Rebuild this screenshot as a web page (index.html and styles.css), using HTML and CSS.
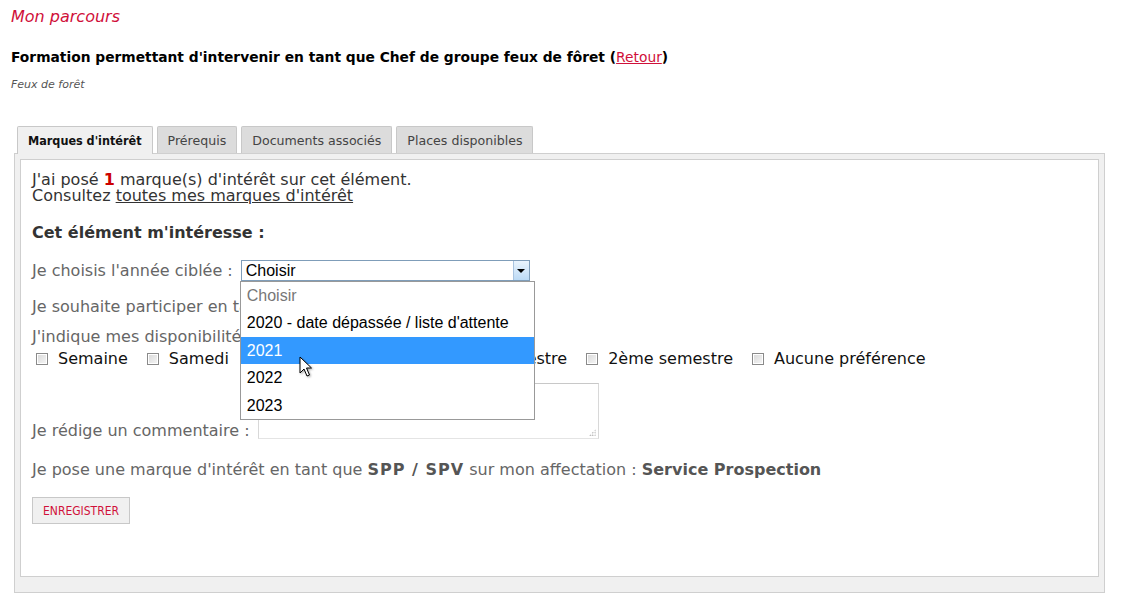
FILE: index.html
```html
<!DOCTYPE html>
<html lang="fr">
<head>
<meta charset="utf-8">
<title>Mon parcours</title>
<link rel="stylesheet" href="styles.css">
</head>
<body>
<div class="page">
  <h1 class="title">Mon parcours</h1>
  <h2 class="subtitle">Formation permettant d'intervenir en tant que Chef de groupe feux de fôret (<a href="#" class="back">Retour</a>)</h2>
  <p class="category">Feux de forêt</p>

  <div class="tabs">
    <div class="tab active">Marques d'intérêt</div>
    <div class="tab">Prérequis</div>
    <div class="tab">Documents associés</div>
    <div class="tab">Places disponibles</div>
  </div>
  <div class="panel">
    <div class="panel-inner">
      <p class="intro">J'ai posé <strong class="count">1</strong> marque(s) d'intérêt sur cet élément.<br>Consultez <a href="#" class="intro-link">toutes mes marques d'intérêt</a></p>
      <h3 class="section">Cet élément m'intéresse :</h3>

      <div class="row row-select">
        <span class="label">Je choisis l'année ciblée :</span>
        <div class="select-wrap">
          <div class="select">
            <span class="select-value">Choisir</span>
            <span class="select-btn"><span class="arrow"></span></span>
          </div>
          <ul class="dropdown">
            <li class="opt placeholder">Choisir</li>
            <li class="opt">2020 - date dépassée / liste d'attente</li>
            <li class="opt selected">2021</li>
            <li class="opt">2022</li>
            <li class="opt">2023</li>
          </ul>
          <svg class="cursor" width="14" height="22" viewBox="0 0 14 22"><path d="M1 1 L1 17 L5 13 L8 20 L10.5 19 L7.5 12 L12.5 12 Z" fill="#fff" stroke="#000" stroke-width="1" stroke-linejoin="round"/></svg>
        </div>
      </div>

      <div class="row row-status">
        <span class="label">Je souhaite participer en tant que : </span>
      </div>

      <div class="row row-dispo">
        <span class="label">J'indique mes disponibilités :</span>
      </div>
      <div class="checks">
        <label class="check"><span class="box"></span>Semaine</label>
        <label class="check"><span class="box"></span>Samedi</label>
        <label class="check"><span class="box"></span>Vacances scolaires</label>
        <label class="check"><span class="box"></span>1er semestre</label>
        <label class="check"><span class="box"></span>2ème semestre</label>
        <label class="check"><span class="box"></span>Aucune préférence</label>
      </div>

      <div class="row row-comment">
        <span class="label">Je rédige un commentaire :</span>
        <div class="textarea"><span class="grip"></span></div>
      </div>

      <p class="row row-mark">Je pose une marque d'intérêt en tant que <b class="strong spaced">SPP / SPV</b> sur mon affectation : <b class="strong">Service Prospection</b></p>

      <button class="save" type="button">ENREGISTRER</button>
    </div>
  </div>
</div>
</body>
</html>
```

FILE: styles.css
```css
* { box-sizing: border-box; }
html, body { margin: 0; padding: 0; background: #fff; }
body { font-family: "DejaVu Sans", Verdana, sans-serif; color: #333; }

.page { padding: 7px 16px 0 11px; }

.title {
  margin: 0;
  font-size: 16px;
  line-height: 20px;
  font-weight: normal;
  font-style: italic;
  color: #d0103a;
}
.subtitle {
  margin: 22px 0 0;
  font-size: 13.8px;
  line-height: 17px;
  font-weight: bold;
  color: #000;
}
.back { color: #d0103a; font-weight: normal; text-decoration: underline; }
.category {
  margin: 12px 0 0;
  font-size: 11px;
  line-height: 13px;
  font-style: italic;
  color: #555;
}

.tabs {
  display: flex;
  margin: 35px 0 -1px 6px;
  position: relative;
  z-index: 2;
}
.tab {
  height: 27px;
  padding: 0 10px;
  margin-right: 4px;
  border: 1px solid #c8c8c8;
  border-bottom: none;
  background: #dcdcdc;
  color: #444;
  font-size: 12.6px;
  line-height: 27px;
  border-radius: 2px 2px 0 0;
}
.tab.active {
  background: #f0f0f0;
  font-family: "DejaVu Sans Condensed", "DejaVu Sans", sans-serif;
  font-size: 12.5px;
  font-weight: bold;
  color: #111;
  height: 28px;
}

.panel {
  margin-left: 3px;
  border: 1px solid #cfcfcf;
  background: #f0f0f0;
  padding: 5px 5px 15px;
  position: relative;
  z-index: 1;
}
.panel-inner {
  background: #fff;
  border: 1px solid #cfcfcf;
  height: 418px;
  padding: 12px 11px 0;
  font-size: 16px;
  color: #666;
}

.intro { margin: 0; line-height: 16px; color: #333; }
.count { color: #c00; }
.intro-link { color: #333; text-decoration: underline; }

.section {
  margin: 21px 0 0;
  font-size: 16px;
  line-height: 16px;
  font-weight: bold;
  color: #333;
}

.row { display: flex; align-items: center; line-height: 16px; }
.label { white-space: nowrap; }

.row-select { margin-top: 19px; height: 21px; }
.select-wrap { position: relative; margin-left: 8px; }
.select {
  width: 289px;
  height: 21px;
  border: 1px solid #7f9db9;
  display: flex;
  align-items: stretch;
  background: #fff;
  font-family: "Liberation Sans", Arial, sans-serif;
  font-size: 16px;
  color: #000;
}
.select-value { flex: 1; padding-left: 4px; line-height: 19px; }
.select-btn {
  width: 16px;
  border-left: 1px solid #a9c4e0;
  background: linear-gradient(#eaf4fd, #bcdaf5);
  display: flex;
  align-items: center;
  justify-content: center;
}
.arrow {
  width: 0; height: 0;
  border-left: 4px solid transparent;
  border-right: 4px solid transparent;
  border-top: 4px solid #000;
}
.dropdown {
  position: absolute;
  left: -1px;
  top: 21px;
  width: 295px;
  margin: 0;
  padding: 0;
  list-style: none;
  background: #fff;
  border: 1px solid #999;
  font-family: "Liberation Sans", Arial, sans-serif;
  font-size: 16px;
  color: #000;
  z-index: 5;
}
.opt { height: 27.4px; line-height: 27.4px; padding-left: 6px; white-space: nowrap; }
.opt.placeholder { color: #777; }
.opt.selected { background: #3399ff; color: #fff; }
.cursor {
  position: absolute;
  left: 58px;
  top: 96px;
  z-index: 6;
  filter: drop-shadow(1px 1px 1px rgba(0,0,0,0.35));
}

.row-status { margin-top: 18px; }
.row-dispo { margin-top: 14px; }

.checks {
  display: flex;
  margin-top: 6px;
  padding-left: 4px;
  line-height: 16px;
  color: #111;
}
.check { display: flex; align-items: center; margin-right: 19px; white-space: nowrap; }
.box {
  width: 12px;
  height: 12px;
  margin-right: 10px;
  border: 1px solid #8a8a8a;
  background: linear-gradient(135deg, #d8d8d8, #f6f6f6);
  box-shadow: inset 0 0 0 1px #fff;
}

.row-comment { margin-top: 16px; align-items: flex-end; }
.textarea {
  position: relative;
  width: 341px;
  height: 56px;
  margin-left: 8px;
  border: 1px solid #d8d8d8;
  border-top-color: #c8c8c8;
  border-bottom-color: #e4e4e4;
}
.grip {
  position: absolute;
  right: 2px;
  bottom: 2px;
  width: 7px;
  height: 7px;
  background: radial-gradient(circle, #999 0.7px, transparent 0.9px) 0 0 / 2.5px 2.5px;
  clip-path: polygon(100% 0, 100% 100%, 0 100%);
}

.row-mark { margin: 23px 0 0; display: block; }
.strong { font-weight: bold; color: #555; }
.spaced { letter-spacing: 1px; }

.save {
  display: block;
  margin-top: 19px;
  height: 27px;
  padding: 0 10px;
  border: 1px solid #c8c8c8;
  background: #f0f0f0;
  color: #d0103a;
  font-family: "DejaVu Sans Condensed", "DejaVu Sans", sans-serif;
  font-size: 12px;
  cursor: pointer;
}
```
